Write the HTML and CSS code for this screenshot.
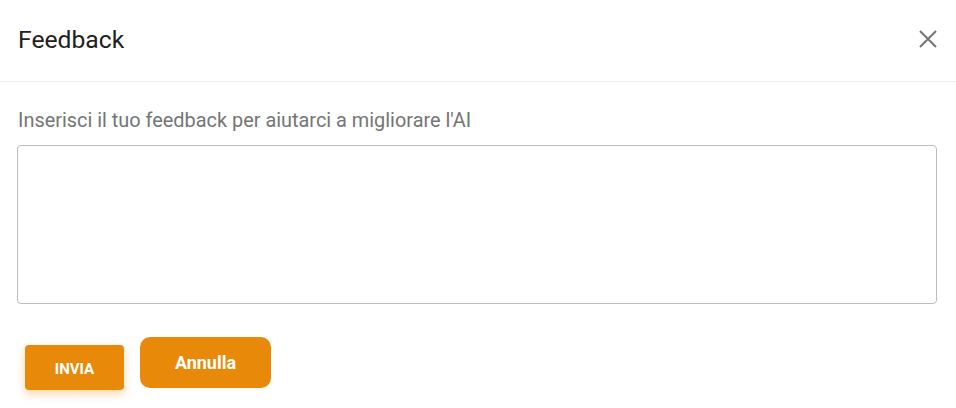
FILE: index.html
```html
<!DOCTYPE html>
<html lang="it">
<head>
<meta charset="utf-8">
<link rel="stylesheet" href="styles.css">
</head>
<body>
<div class="dialog">
  <div class="header">
    <h2 class="title">Feedback</h2>
    <button class="close" aria-label="Chiudi">
      <svg width="20" height="20" viewBox="0 0 20 20"><path d="M2 2 L18 18 M18 2 L2 18" stroke="#757575" stroke-width="2" fill="none"/></svg>
    </button>
  </div>
  <div class="body">
    <label class="label">Inserisci il tuo feedback per aiutarci a migliorare l'AI</label>
    <textarea class="input"></textarea>
    <div class="actions">
      <button class="btn btn-send">INVIA</button>
      <button class="btn btn-cancel">Annulla</button>
    </div>
  </div>
</div>
</body>
</html>
```
FILE: styles.css
```css
* { box-sizing: border-box; }
html, body { margin: 0; padding: 0; background: #fff; }
body { font-family: Roboto, "Noto Sans", sans-serif; width: 956px; height: 408px; overflow: hidden; }
.dialog { width: 956px; }
.header {
  height: 82px;
  display: flex;
  align-items: center;
  justify-content: space-between;
  padding: 0 18px 0 18px;
  border-bottom: 1px solid #eeeeee;
}
.title { margin: 0; font-size: 24.7px; font-weight: 400; color: #212121; padding-bottom: 3px; }
.close { border: 0; background: none; padding: 0; width: 20px; height: 20px; margin-bottom: 3px; cursor: pointer; }
.close svg { display: block; }
.body { padding: 24px 19px 0 17px; }
.label { display: block; font-size: 19.9px; color: #757575; margin-left: 1px; line-height: 29px; }
.input {
  display: block;
  width: 920px;
  height: 159px;
  margin-top: 10px;
  border: 1px solid #bdbdbd;
  border-radius: 4px;
  resize: none;
  font-family: inherit;
}
.actions { display: flex; align-items: flex-start; gap: 16px; margin-top: 33px; padding-left: 8px; }
.btn { border: 0; background: #e8890a; color: #fff; font-family: inherit; font-weight: 700; cursor: pointer; }
.btn-send {
  width: 99px; height: 45px; margin-top: 8px;
  border-radius: 4px; font-size: 15px;
  box-shadow: 0 4px 10px rgba(232,137,10,0.35);
  padding-top: 3px;
}
.btn-cancel { width: 131px; height: 51px; border-radius: 10px; font-size: 18px; padding-bottom: 2px; }
```
